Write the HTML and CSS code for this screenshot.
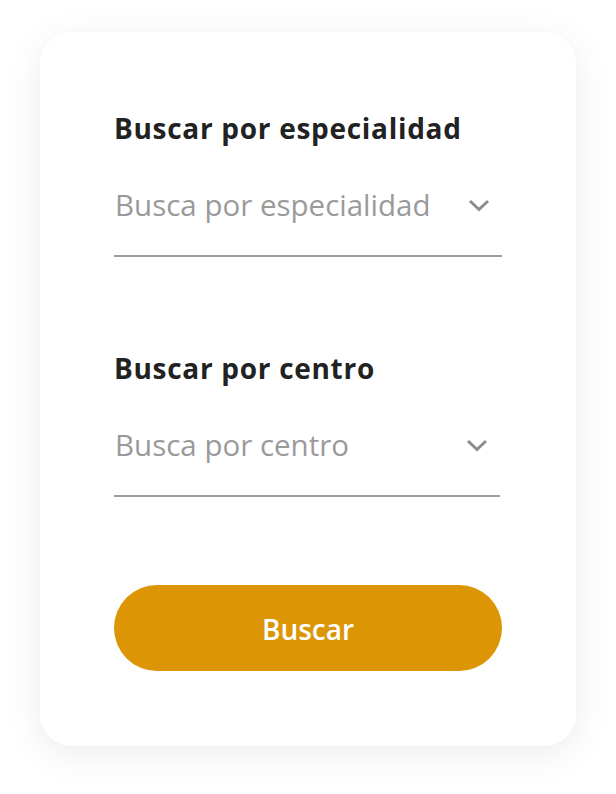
FILE: index.html
```html
<!DOCTYPE html>
<html lang="es">
<head>
<meta charset="utf-8">
<link rel="stylesheet" href="styles.css">
</head>
<body>
<div class="card">
  <div class="field">
    <div class="label">Buscar por especialidad</div>
    <div class="select">
      <span class="placeholder">Busca por especialidad</span>
      <svg class="chev" width="22" height="13" viewBox="0 0 22 13"><polyline points="2,2 11,10.5 20,2" fill="none" stroke="#8c8c8c" stroke-width="3"/></svg>
    </div>
  </div>
  <div class="field field-second">
    <div class="label">Buscar por centro</div>
    <div class="select select-narrow">
      <span class="placeholder">Busca por centro</span>
      <svg class="chev" width="22" height="13" viewBox="0 0 22 13"><polyline points="2,2 11,10.5 20,2" fill="none" stroke="#8c8c8c" stroke-width="3"/></svg>
    </div>
  </div>
  <button class="btn">Buscar</button>
</div>
</body>
</html>
```
FILE: styles.css
```css
html, body {
  margin: 0;
  padding: 0;
  background: #ffffff;
}
body {
  font-family: "Open Sans", "Noto Sans", sans-serif;
  padding: 32px 40px 48px 40px;
}
.card {
  width: 536px;
  height: 714px;
  box-sizing: border-box;
  background: #fff;
  border-radius: 32px;
  box-shadow: 0 8px 36px rgba(0, 0, 0, 0.08);
  padding: 79px 74px 0 74px;
  display: flex;
  flex-direction: column;
}
.label {
  font-size: 28px;
  font-weight: 700;
  color: #222222;
  line-height: 35px;
  letter-spacing: 0.7px;
}
.select {
  margin-top: 39px;
  display: flex;
  align-items: center;
  justify-content: space-between;
  border-bottom: 2px solid #9e9e9e;
  padding: 0 12px 30px 1px;
}
.select-narrow {
  margin-right: 2px;
}
.placeholder {
  font-size: 29.5px;
  color: #9a9a9a;
  line-height: 40px;
}
.chev {
  display: block;
}
.field-second {
  margin-top: 94px;
}
.btn {
  margin-top: 88px;
  height: 86px;
  border: none;
  border-radius: 43px;
  background: #dc9504;
  color: #ffffff;
  font-family: "Open Sans", "Noto Sans", sans-serif;
  font-size: 28px;
  font-weight: 600;
  padding-top: 2px;
  cursor: pointer;
}
```
